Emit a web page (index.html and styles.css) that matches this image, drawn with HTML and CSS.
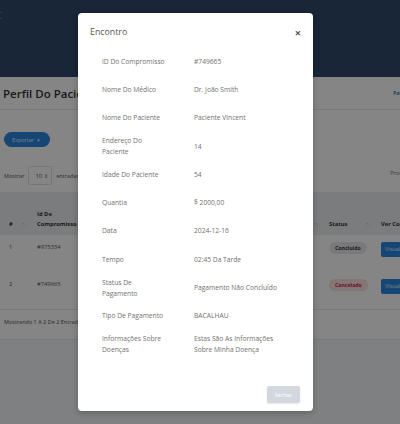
FILE: index.html
```html
<!DOCTYPE html>
<html lang="pt">
<head>
<meta charset="utf-8">
<title>Perfil Do Paciente</title>
<link rel="stylesheet" href="styles.css">
</head>
<body>
<div class="page">
  <header class="topbar"><span class="menu-mark"></span></header>
  <div class="titlebar">
    <h1 class="page-title">Perfil Do Paciente</h1>
    <a class="crumb">Painel</a>
  </div>
  <div class="content">
    <button class="export-btn">Exportar <span class="caret">▾</span></button>
    <div class="tools">
      <div class="length">
        <span>Mostrar</span>
        <span class="select-box">10 <span class="updown">⇕</span></span>
        <span>entradas</span>
      </div>
      <div class="search">Procurar:</div>
    </div>
    <table class="data-table">
      <colgroup>
        <col class="c-num"><col class="c-id"><col class="c-mid"><col class="c-status"><col class="c-ver">
      </colgroup>
      <thead>
        <tr>
          <th><span class="th-in">#<span class="sort">↑↓</span></span></th>
          <th><span class="th-in">Id De Compromisso</span></th>
          <th><span class="th-in">Nome Do Médico<span class="sort">↑↓</span></span></th>
          <th><span class="th-in">Status<span class="sort">↑↓</span></span></th>
          <th><span class="th-in">Ver Comprovante</span></th>
        </tr>
      </thead>
      <tbody>
        <tr>
          <td>1</td><td>#975334</td><td>Dr. João Smith</td>
          <td><span class="badge badge-done">Concluído</span></td>
          <td><span class="view-btn">Visualizar</span></td>
        </tr>
        <tr>
          <td>2</td><td>#749665</td><td>Dr. João Smith</td>
          <td><span class="badge badge-cancel">Cancelado</span></td>
          <td><span class="view-btn">Visualizar</span></td>
        </tr>
      </tbody>
    </table>
    <div class="table-info">Mostrando 1 A 2 De 2 Entradas</div>
  </div>
</div>

<div class="backdrop"></div>

<div class="modal">
  <div class="modal-header">
    <h2 class="modal-title">Encontro</h2>
    <span class="close">×</span>
  </div>
  <div class="modal-body">
    <div class="row"><div class="lbl">ID Do Compromisso</div><div class="val">#749665</div></div>
    <div class="row"><div class="lbl">Nome Do Médico</div><div class="val">Dr. João Smith</div></div>
    <div class="row"><div class="lbl">Nome Do Paciente</div><div class="val">Paciente Vincent</div></div>
    <div class="row"><div class="lbl">Endereço Do<br>Paciente</div><div class="val">14</div></div>
    <div class="row"><div class="lbl">Idade Do Paciente</div><div class="val">54</div></div>
    <div class="row"><div class="lbl">Quantia</div><div class="val">$ 2000,00</div></div>
    <div class="row"><div class="lbl">Data</div><div class="val">2024-12-16</div></div>
    <div class="row"><div class="lbl">Tempo</div><div class="val">02:45 Da Tarde</div></div>
    <div class="row"><div class="lbl">Status De<br>Pagamento</div><div class="val">Pagamento Não Concluído</div></div>
    <div class="row"><div class="lbl">Tipo De Pagamento</div><div class="val">BACALHAU</div></div>
    <div class="row"><div class="lbl">Informações Sobre<br>Doenças</div><div class="val">Estas São As Informações<br>Sobre Minha Doença</div></div>
  </div>
  <div class="modal-footer">
    <button class="close-btn">Fechar</button>
  </div>
</div>
</body>
</html>
```
FILE: styles.css
```css
* { box-sizing: border-box; }
html, body {
  margin: 0;
  padding: 0;
  width: 400px;
  height: 424px;
  overflow: hidden;
}
body {
  font-family: "Open Sans", "Liberation Sans", sans-serif;
  background: #f2f3f5;
  color: #444;
  position: relative;
}
.page {
  width: 400px;
  height: 424px;
  overflow: hidden;
  background: #f4f5f7;
}
.topbar {
  height: 77px;
  background: #2e4a6c;
  padding-top: 12px;
}
.menu-mark {
  display: block;
  width: 2px;
  height: 7px;
  border-top: 1px solid #55708f;
  border-bottom: 1px solid #55708f;
}
.titlebar {
  height: 33px;
  background: #ffffff;
  border-bottom: 1px solid #e4e6ea;
  display: flex;
  align-items: center;
  justify-content: space-between;
  padding: 0 0 0 3px;
}
.page-title {
  margin: 0;
  font-size: 11.5px;
  font-weight: 600;
  color: #333;
  white-space: nowrap;
}
.crumb {
  font-size: 5px;
  color: #2b6ab8;
  font-weight: 600;
  margin-right: -8px;
  white-space: nowrap;
}
.content {
  background: #ffffff;
  padding: 22px 0 0 4px;
  height: 230px;
  border-bottom: 1px solid #e4e6ea;
}
.export-btn {
  display: flex;
  align-items: center;
  gap: 3px;
  height: 15px;
  width: 46px;
  padding: 0 0 0 8px;
  border: none;
  border-radius: 8px;
  background: #2a86e0;
  color: #e8f1fb;
  font-family: inherit;
  font-size: 5.5px;
}
.caret { font-size: 5px; }
.tools {
  display: flex;
  justify-content: space-between;
  align-items: center;
  margin-top: 19px;
  font-size: 5.5px;
  color: #555;
}
.length {
  display: flex;
  align-items: center;
  gap: 4px;
}
.select-box {
  display: inline-flex;
  align-items: center;
  gap: 2px;
  height: 19px;
  width: 24px;
  padding-left: 6px;
  border: 1px solid #e0e2e6;
  border-radius: 2px;
  font-size: 6px;
}
.updown { font-size: 5px; }
.search {
  margin-right: -14px;
  color: #777;
  margin-top: -6px;
}
.data-table {
  margin-top: 7px;
  margin-left: -4px;
  border-collapse: collapse;
  table-layout: fixed;
  width: 440px;
  font-size: 5.8px;
}
.c-num { width: 31px; }
.c-id { width: 50px; }
.c-mid { width: 242px; }
.c-status { width: 52px; }
.c-ver { width: 65px; }
.data-table thead tr {
  background: #eceef1;
  height: 43px;
}
.data-table th {
  text-align: left;
  vertical-align: bottom;
  padding: 0 4px 6px 6px;
  font-weight: 700;
  color: #333;
  line-height: 10px;
}
.data-table th:first-child { padding-left: 9px; }
.th-in {
  display: flex;
  justify-content: space-between;
  align-items: flex-end;
}
.sort {
  font-weight: 400;
  color: #aaa;
  font-size: 5px;
}
.data-table td {
  vertical-align: top;
  padding: 7px 4px 0 6px;
  height: 37px;
  color: #555;
  white-space: nowrap;
  overflow: hidden;
}
.data-table td:first-child { padding-left: 9px; padding-top: 8px; }
.data-table td:nth-child(2) { padding-top: 8px; }
.data-table tbody tr:last-child td { border-bottom: 1px solid #e4e6ea; }
.badge {
  display: inline-block;
  padding: 0 6px;
  height: 12px;
  line-height: 12px;
  border-radius: 6px;
  font-weight: 700;
  font-size: 5.2px;
}
.badge-done { background: #e8e9ec; color: #333; }
.badge-cancel { background: #fbe2e4; color: #d0263a; }
.view-btn {
  display: inline-block;
  height: 15px;
  line-height: 15px;
  padding: 0 4px;
  background: #2a86e0;
  color: #e8f1fb;
  border-radius: 2px;
  font-size: 5.5px;
}
.table-info {
  margin-top: 8px;
  font-size: 5.5px;
  color: #555;
}
.backdrop {
  position: absolute;
  inset: 0;
  background: rgba(0, 0, 0, 0.48);
}
.modal {
  position: absolute;
  left: 78px;
  top: 13px;
  width: 235px;
  height: 398px;
  background: #fff;
  border-radius: 4px;
  box-shadow: 0 2px 6px rgba(0, 0, 0, 0.25);
  display: flex;
  flex-direction: column;
}
.modal-header {
  height: 34px;
  display: flex;
  align-items: center;
  justify-content: space-between;
  padding: 4px 12px 0 12px;
}
.modal-title {
  margin: 0;
  font-size: 8.8px;
  font-weight: 400;
  color: #555;
}
.close {
  font-size: 11px;
  font-weight: 700;
  color: #555;
  line-height: 1;
}
.modal-body {
  padding: 0 0 0 24px;
}
.row {
  display: flex;
  align-items: center;
  height: 28.3px;
  font-size: 6.7px;
  line-height: 11px;
  color: #707070;
}
.lbl { width: 92px; flex: none; }
.val { flex: 1; }
.modal-footer {
  margin-top: auto;
  display: flex;
  justify-content: flex-end;
  padding: 0 13px 8px 0;
}
.close-btn {
  width: 33px;
  height: 17px;
  border: none;
  border-radius: 2px;
  background: #d3d8df;
  color: #fff;
  font-family: inherit;
  font-size: 5.5px;
  box-shadow: 0 1px 2px rgba(0,0,0,0.1);
}
```
